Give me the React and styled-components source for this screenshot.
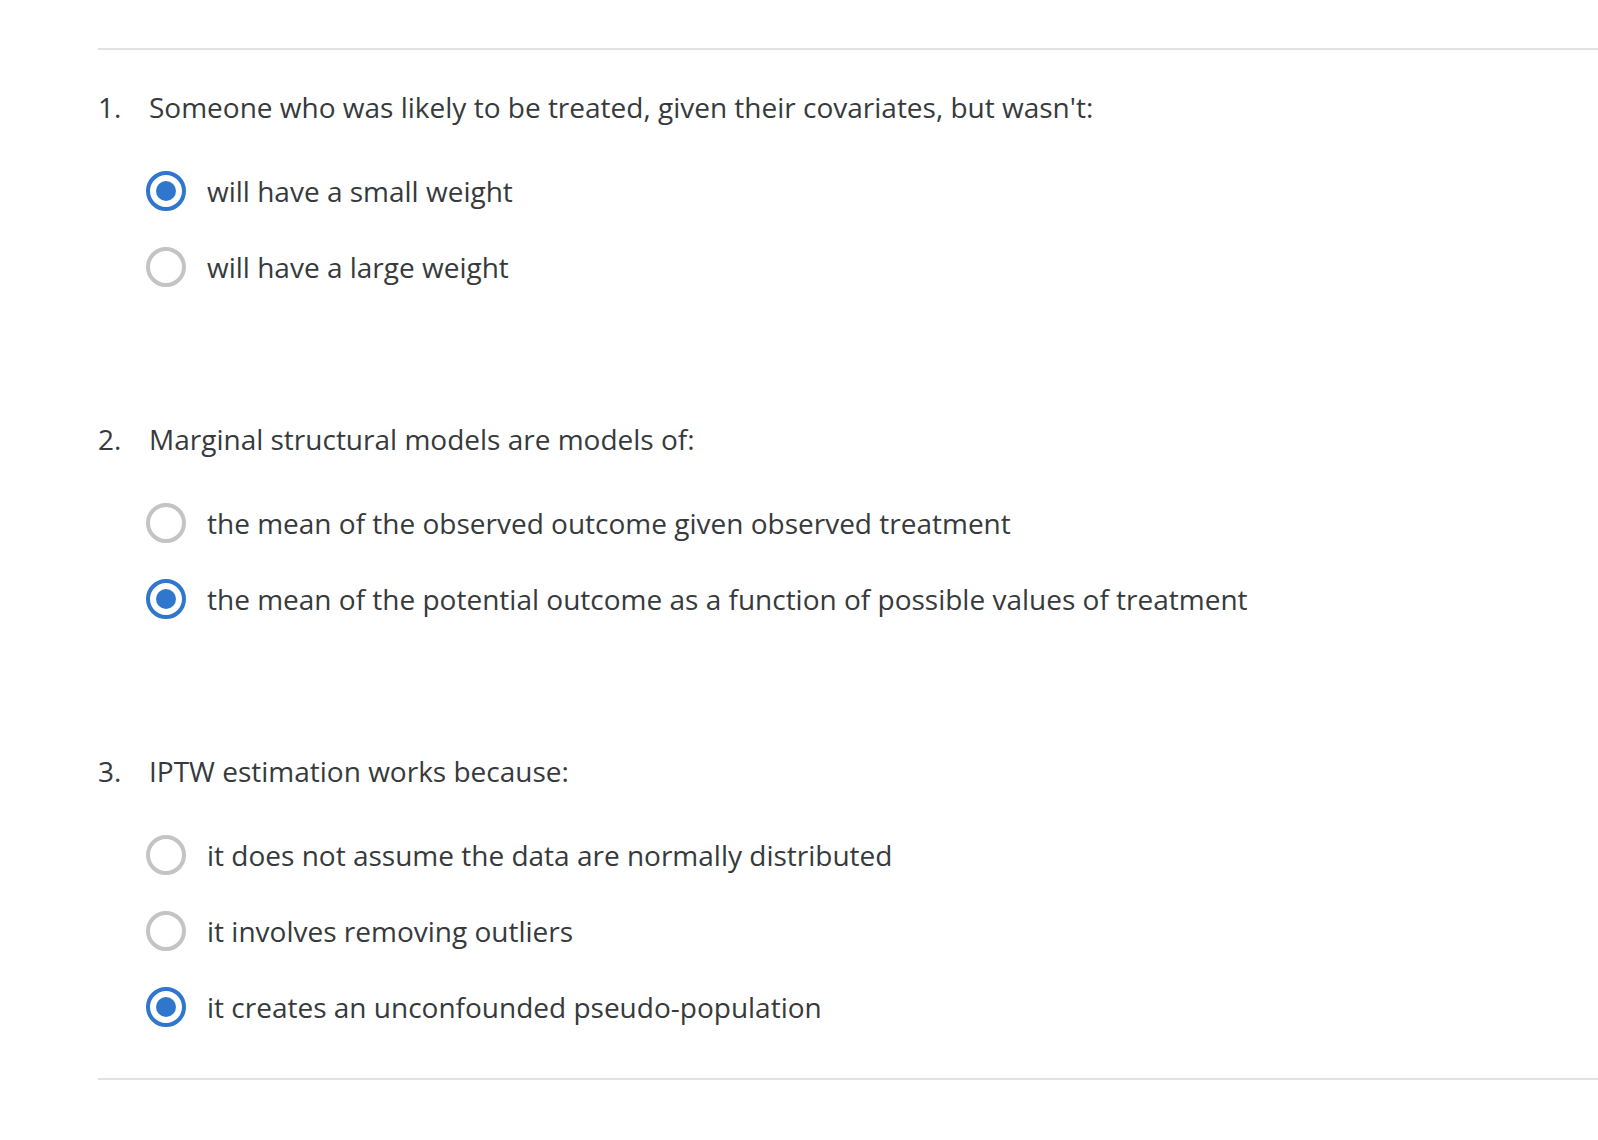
import React from "react";
import styled, { createGlobalStyle } from "styled-components";

const GlobalStyle = createGlobalStyle`
  html, body {
    margin: 0;
    padding: 0;
    background: #ffffff;
  }
  body {
    font-family: "Open Sans", "Noto Sans", "Liberation Sans", sans-serif;
    color: #373a3c;
    overflow: hidden;
  }
`;

const Page = styled.div`
  width: 1598px;
  padding-left: 98px;
  box-sizing: border-box;
`;

const Rule = styled.div`
  height: 2px;
  background: #e2e2e2;
  margin-top: ${(p) => p.$top || 0}px;
`;

const QuestionList = styled.ol`
  list-style: none;
  margin: 0;
  padding: 37px 0 51px;
  display: flex;
  flex-direction: column;
  gap: 132px;
`;

const Question = styled.li`
  display: flex;
  flex-direction: column;
  gap: 44px;
`;

const Prompt = styled.div`
  display: flex;
  font-size: 28px;
  line-height: 40px;
`;

const Num = styled.span`
  width: 51px;
  flex: none;
`;

const Options = styled.div`
  display: flex;
  flex-direction: column;
  gap: 36px;
  padding-left: 48px;
`;

const Option = styled.label`
  display: flex;
  align-items: center;
  gap: 21px;
  font-size: 28px;
  line-height: 40px;
  cursor: pointer;
`;

const Radio = styled.span`
  width: 40px;
  height: 40px;
  box-sizing: border-box;
  border-radius: 50%;
  border: 4.5px solid ${(p) => (p.$checked ? "#2f77cc" : "#c4c4c4")};
  display: flex;
  align-items: center;
  justify-content: center;
  flex: none;

  &::after {
    content: "";
    width: 20px;
    height: 20px;
    border-radius: 50%;
    background: #2f77cc;
    display: ${(p) => (p.$checked ? "block" : "none")};
  }
`;

const questions = [
  {
    text: "Someone who was likely to be treated, given their covariates, but wasn't:",
    options: ["will have a small weight", "will have a large weight"],
    answer: 0,
  },
  {
    text: "Marginal structural models are models of:",
    options: [
      "the mean of the observed outcome given observed treatment",
      "the mean of the potential outcome as a function of possible values of treatment",
    ],
    answer: 1,
  },
  {
    text: "IPTW estimation works because:",
    options: [
      "it does not assume the data are normally distributed",
      "it involves removing outliers",
      "it creates an unconfounded pseudo-population",
    ],
    answer: 2,
  },
];

export default function App() {
  return (
    <Page>
      <GlobalStyle />
      <Rule $top={48} />
      <QuestionList>
        {questions.map((q, i) => (
          <Question key={i}>
            <Prompt>
              <Num>{i + 1}.</Num>
              <span>{q.text}</span>
            </Prompt>
            <Options>
              {q.options.map((o, j) => (
                <Option key={j}>
                  <Radio $checked={j === q.answer} />
                  <span>{o}</span>
                </Option>
              ))}
            </Options>
          </Question>
        ))}
      </QuestionList>
      <Rule />
    </Page>
  );
}
